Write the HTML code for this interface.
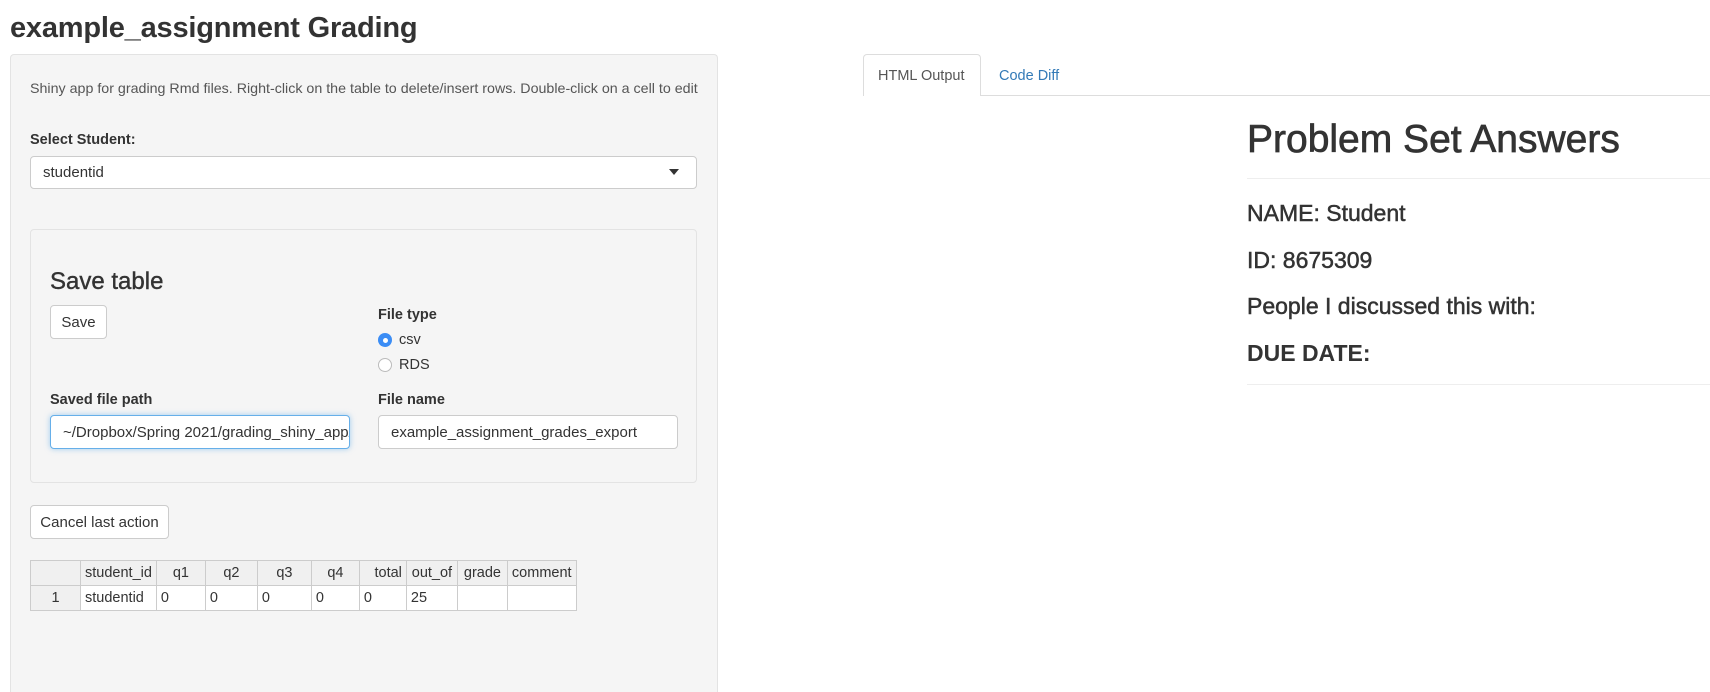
<!DOCTYPE html>
<html style="width:1710px;height:692px;overflow:hidden"><head><meta charset="utf-8">
<style>
*{box-sizing:border-box;margin:0;padding:0}
body{width:1710px;height:692px;overflow:hidden;background:#fff;font-family:"Liberation Sans",Arial,sans-serif;color:#333;position:relative;font-size:15px}
.a{position:absolute;white-space:nowrap}
.panel{position:absolute;left:10px;top:54px;width:708px;height:638px;background:#f5f5f5;border:1px solid #e3e3e3;border-bottom:none;border-radius:4px 4px 0 0}
.well{position:absolute;left:30px;top:229px;width:667px;height:254px;background:#f5f5f5;border:1px solid #e3e3e3;border-radius:4px}
.inp{position:absolute;background:#fff;border:1px solid #ccc;border-radius:4px;font-size:15px;padding-left:12px;display:flex;align-items:center;white-space:nowrap;overflow:hidden}
.btn{position:absolute;background:#fff;border:1px solid #ccc;border-radius:4px;font-size:15px;display:flex;align-items:center;justify-content:center}
label{font-weight:bold;font-size:14.5px}
table{position:absolute;left:30px;top:560px;border-collapse:collapse;font-size:14.5px}
td,th{border:1px solid #ccc;height:25px;padding:0 4px;font-weight:normal;text-align:left;white-space:nowrap}
th{background:#f0f0f0;text-align:center}
td.rh{background:#f0f0f0;text-align:center}
.m{-webkit-text-stroke:0.5px #333}
</style></head><body>
<div class="a" style="left:10px;top:12px;font-size:29px;font-weight:bold;letter-spacing:-0.2px">example_assignment Grading</div>
<div class="panel"></div>
<div class="a" style="left:30px;top:81px;font-size:14.25px;color:#555">Shiny app for grading Rmd files. Right-click on the table to delete/insert rows. Double-click on a cell to edit</div>
<label class="a" style="left:30px;top:132px">Select Student:</label>
<div class="inp" style="left:30px;top:156px;width:667px;height:33px">studentid</div>
<div class="a" style="left:669px;top:169px;width:0;height:0;border-left:5px solid transparent;border-right:5px solid transparent;border-top:6px solid #333"></div>
<div class="well"></div>
<div class="a m" style="left:50px;top:268px;font-size:24px;-webkit-text-stroke:0.4px #333">Save table</div>
<div class="btn" style="left:50px;top:305px;width:57px;height:34px">Save</div>
<label class="a" style="left:378px;top:307px">File type</label>
<div class="a" style="left:378px;top:333px;width:14px;height:14px;border-radius:50%;background:#3b8df5"><div style="position:absolute;left:4.5px;top:4.5px;width:5px;height:5px;border-radius:50%;background:#fff"></div></div>
<div class="a" style="left:399px;top:332px;font-size:14.5px">csv</div>
<div class="a" style="left:378px;top:358px;width:14px;height:14px;border-radius:50%;background:#fff;border:1px solid #bbb"></div>
<div class="a" style="left:399px;top:357px;font-size:14.5px">RDS</div>
<label class="a" style="left:50px;top:392px">Saved file path</label>
<label class="a" style="left:378px;top:392px">File name</label>
<div class="inp" style="left:50px;top:415px;width:300px;height:34px;border-color:#66afe9;box-shadow:0 0 6px rgba(102,175,233,.6)">~/Dropbox/Spring 2021/grading_shiny_app/</div>
<div class="inp" style="left:378px;top:415px;width:300px;height:34px">example_assignment_grades_export</div>
<div class="btn" style="left:30px;top:505px;width:139px;height:34px">Cancel last action</div>
<table>
<tr><th style="width:50px"></th><th style="width:74px">student_id</th><th style="width:49px">q1</th><th style="width:52px">q2</th><th style="width:54px">q3</th><th style="width:48px">q4</th><th style="width:47px;text-align:right">total</th><th style="width:51px">out_of</th><th style="width:50px">grade</th><th style="width:66px">comment</th></tr>
<tr><td class="rh">1</td><td style="background:#fff">studentid</td><td style="background:#fff">0</td><td style="background:#fff">0</td><td style="background:#fff">0</td><td style="background:#fff">0</td><td style="background:#fff">0</td><td style="background:#fff">25</td><td style="background:#fff"></td><td style="background:#fff"></td></tr>
</table>
<div class="a" style="left:863px;top:95px;width:847px;height:1px;background:#ddd"></div>
<div class="a" style="left:863px;top:54px;width:118px;height:42px;background:#fff;border:1px solid #ddd;border-bottom:none;border-radius:4px 4px 0 0"></div>
<div class="a" style="left:878px;top:68px;font-size:14.5px;color:#555">HTML Output</div>
<div class="a" style="left:999px;top:68px;font-size:14.5px;color:#337ab7">Code Diff</div>
<div class="a m" style="left:1247px;top:118px;font-size:39px;-webkit-text-stroke:0.7px #333">Problem Set Answers</div>
<div class="a" style="left:1247px;top:178px;width:463px;height:1px;background:#eee"></div>
<div class="a m" style="left:1247px;top:200px;font-size:23px">NAME: Student</div>
<div class="a m" style="left:1247px;top:247px;font-size:23px">ID: 8675309</div>
<div class="a m" style="left:1247px;top:293px;font-size:23px">People I discussed this with:</div>
<div class="a" style="left:1247px;top:340px;font-size:23px;font-weight:bold">DUE DATE:</div>
<div class="a" style="left:1247px;top:384px;width:463px;height:1px;background:#eee"></div>
</body></html>
